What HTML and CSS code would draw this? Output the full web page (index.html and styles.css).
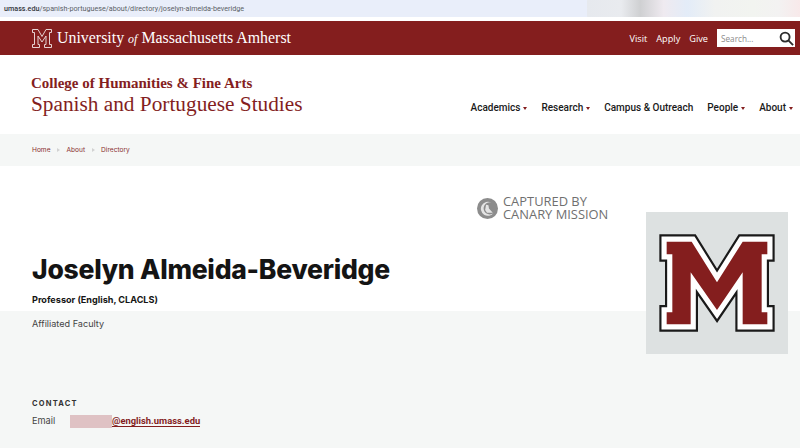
FILE: index.html
```html
<!DOCTYPE html>
<html lang="en">
  <head>
    <meta charset="UTF-8" />
    <meta name="viewport" content="width=device-width, initial-scale=1.0" />
    <title>Joselyn Almeida-Beveridge</title>
    <link rel="stylesheet" href="styles.css">
  </head>
  <body>
    <div class="url-bar">
      <span class="url"><b>umass.edu</b>/spanish-portuguese/about/directory/joselyn-almeida-beveridge</span>
      <div class="tabs"></div>
    </div>

    <header class="topbar">
      <a class="wordmark" href="#">
        <svg class="wordmark-m" viewBox="0 0 20 19" aria-hidden="true">
          <path d="M.5.5H6L10 7.500 14 .5H19.500V3.500H17.500V15.500H19.500V18.500H12.500V15.500H14V7L10 13 6 7V15.500H7.500V18.500H.5V15.500H2.500V3.500H.5Z" />
        </svg>
        <span>University <i>of</i> Massachusetts Amherst</span>
      </a>
      <nav class="toplinks">
        <a href="#">Visit</a>
        <a href="#">Apply</a>
        <a href="#">Give</a>
        <div class="search">
          <span>Search...</span>
          <svg viewBox="0 0 16 16" aria-hidden="true">
            <circle cx="6.500" cy="6.500" r="4.800" />
            <path d="M10 10L15 15" />
          </svg>
        </div>
      </nav>
    </header>

    <div class="site-head">
      <div class="site-title">
        <div class="college">College of Humanities &amp; Fine Arts</div>
        <div class="dept">Spanish and Portuguese Studies</div>
      </div>
      <nav class="mainnav">
        <a class="drop" href="#">Academics</a>
        <a class="drop" href="#">Research</a>
        <a href="#">Campus &amp; Outreach</a>
        <a class="drop" href="#">People</a>
        <a class="drop" href="#">About</a>
      </nav>
    </div>

    <div class="crumbs">
      <a href="#">Home</a>
      <a href="#">About</a>
      <a href="#">Directory</a>
    </div>

    <main class="profile">
      <div class="profile-top">
        <div class="captured">
          <svg viewBox="0 0 22 22" aria-hidden="true">
            <circle class="disc" cx="11" cy="11" r="11" />
            <path class="moon" d="M15 4.800A7.400 7.400 0 1 0 17.500 15.500 6.300 6.300 0 1 1 15 4.800Z" />
            <path class="bird" d="M9.500 7L12 7.500 12.500 11 16.500 15.500H10.500L8.500 12.500Z" />
          </svg>
          <span>CAPTURED BY<br>CANARY MISSION</span>
        </div>
        <h1>Joselyn Almeida-Beveridge</h1>
        <p class="job">Professor (English, CLACLS)</p>
      </div>
      <div class="profile-body">
        <p class="role">Affiliated Faculty</p>
        <h2>CONTACT</h2>
        <div class="contact-row">
          <span class="contact-label">Email</span>
          <span class="blur-box"></span>
          <a href="#">@english.umass.edu</a>
        </div>
      </div>
      <div class="photo">
        <svg viewBox="558 81 426 426" aria-hidden="true">
          <defs>
            <polygon id="big-m" points="620,170 695,170 771,292 848,170 922,170 922,208 905,208 905,382 922,382 922,418 848,418 848,262 771,375 692,262 692,418 620,418 620,382 637,382 637,208 620,208" />
          </defs>
          <use href="#big-m" class="m-outer" />
          <use href="#big-m" class="m-inner" />
          <use href="#big-m" class="m-fill" />
        </svg>
      </div>
    </main>
  </body>
</html>
```

FILE: styles.css
```css
body {
  font-family: "Inter", "Liberation Sans", sans-serif;
  margin: 0;
  padding: 0;
  background-color: #fff;
  overflow: hidden;
}
a {
  color: inherit;
  text-decoration: none;
}

.url-bar {
  height: 17px;
  background-color: #e9eefa;
  display: flex;
  align-items: center;
  justify-content: space-between;
  padding-left: 4px;
}
.url {
  font-family: "Roboto", sans-serif;
  font-size: 7.200px;
  color: #5a5f66;
}
.url b {
  font-weight: 500;
  color: #33373c;
}
.tabs {
  width: 213px;
  height: 17px;
  background: linear-gradient(90deg, #e6e9ee 0, #e9ebef 16%, #cfd0d2 25%, #efeaf0 36%, #e3ecf8 47%, #f1f2f1 60%, #f2f4f0 78%, #f3f2f2 90%, #f8e9ea 100%);
}

.topbar {
  margin-top: 4px;
  height: 34px;
  background-color: #841e1e;
  display: flex;
  align-items: center;
  justify-content: space-between;
  padding: 0 5px 0 32px;
  color: #fff;
}
.wordmark {
  display: flex;
  align-items: center;
  gap: 5px;
  font-family: "Liberation Serif", serif;
  font-size: 15.900px;
}
.wordmark i {
  font-size: 12px;
}
.wordmark-m {
  width: 20px;
  height: 19px;
  fill: none;
  stroke: #e6d2d2;
  stroke-width: 1;
}
.toplinks {
  display: flex;
  align-items: center;
  font-family: "Open Sans", sans-serif;
  font-size: 9.200px;
  gap: 9px;
}
.search {
  width: 78px;
  height: 18px;
  background-color: #fff;
  display: flex;
  align-items: center;
  justify-content: space-between;
  padding: 0 1px 0 4px;
  box-sizing: border-box;
  color: #8b8b8b;
  font-size: 8.200px;
}
.search svg {
  width: 15px;
  height: 15px;
  fill: none;
  stroke: #2c2c2c;
  stroke-width: 2;
}

.site-head {
  height: 79px;
  display: flex;
  justify-content: space-between;
  padding: 0 7px 0 31px;
}
.site-title {
  padding-top: 20px;
  font-family: "Liberation Serif", serif;
  color: #841e1e;
}
.college {
  font-size: 15px;
  font-weight: bold;
  line-height: 17px;
}
.dept {
  font-size: 21.300px;
  line-height: 25px;
}
.mainnav {
  display: flex;
  gap: 14px;
  padding-top: 46px;
  font-family: "Roboto", sans-serif;
  font-size: 10px;
  line-height: 13px;
  font-weight: 500;
  color: #1a1a1a;
}
.mainnav .drop::after {
  content: "";
  display: inline-block;
  margin-left: 3px;
  vertical-align: middle;
  border-left: 2.500px solid transparent;
  border-right: 2.500px solid transparent;
  border-top: 3px solid #841e1e;
}

.crumbs {
  height: 32px;
  background-color: #f5f7f6;
  display: flex;
  align-items: center;
  gap: 16px;
  padding-left: 32px;
  font-size: 6.600px;
  color: #8a3030;
}
.crumbs a {
  position: relative;
}
.crumbs a + a::before {
  content: "";
  position: absolute;
  left: -9.500px;
  top: 2px;
  border-left: 3px solid #d2d2d2;
  border-top: 2.500px solid transparent;
  border-bottom: 2.500px solid transparent;
}

.profile {
  position: relative;
}
.profile-top {
  height: 145px;
  box-sizing: border-box;
  padding: 29px 0 0 32px;
}
.captured {
  display: flex;
  align-items: center;
  gap: 5px;
  margin-left: 445px;
  height: 26px;
  font-family: "Open Sans", sans-serif;
  font-size: 12.900px;
  font-weight: 500;
  line-height: 13px;
  color: #6f6f6f;
}
.captured svg {
  width: 21px;
  height: 21px;
  flex: none;
}
.disc {
  fill: #8c8c8c;
}
.moon,
.bird {
  fill: #e4e4e4;
}
h1 {
  margin: 32px 0 0;
  font-size: 26.500px;
  letter-spacing: -0.250px;
  line-height: 33px;
  font-weight: 800;
  color: #141414;
}
.job {
  margin: 7px 0 0;
  font-size: 9.100px;
  line-height: 13px;
  font-weight: 700;
  color: #141414;
}

.profile-body {
  height: 137px;
  box-sizing: border-box;
  background-color: #f5f7f6;
  padding: 6px 0 0 32px;
  color: #444;
}
.role {
  margin: 0;
  font-size: 9.100px;
  line-height: 14px;
}
h2 {
  margin: 67px 0 0;
  font-size: 7.500px;
  line-height: 12px;
  letter-spacing: 1.200px;
  font-weight: 700;
  color: #333;
}
.contact-row {
  display: flex;
  align-items: center;
  margin-top: 4px;
  font-size: 9.200px;
  line-height: 14px;
}
.contact-label {
  width: 38px;
}
.blur-box {
  width: 42px;
  height: 13px;
  background-color: #dfc2c4;
}
.contact-row a {
  color: #841e1e;
  font-family: "Roboto", sans-serif;
  font-size: 9.400px;
  font-weight: 700;
  border-bottom: 1px solid #841e1e;
  line-height: 11px;
}

.photo {
  position: absolute;
  top: 46px;
  left: 646px;
  width: 142px;
  height: 142px;
  background-color: #dde1e1;
}
.photo svg {
  display: block;
  width: 142px;
  height: 142px;
}
.m-outer {
  fill: #1a1a1a;
  stroke: #1a1a1a;
  stroke-width: 44;
}
.m-inner {
  fill: #fff;
  stroke: #fff;
  stroke-width: 31;
}
.m-fill {
  fill: #841e1e;
}
```
